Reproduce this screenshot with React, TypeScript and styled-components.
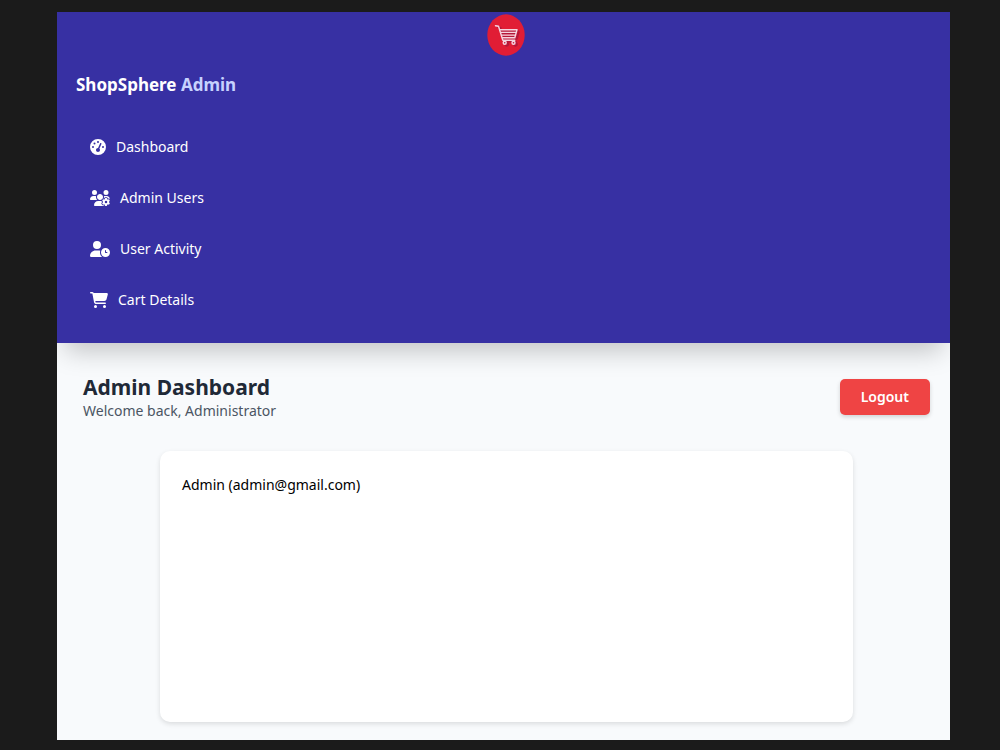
import React from "react";
import styled, { createGlobalStyle } from "styled-components";
import { FaGaugeHigh, FaUsersGear, FaUserClock, FaCartShopping } from "react-icons/fa6";

const GlobalStyle = createGlobalStyle`
  *, *::before, *::after { box-sizing: border-box; }
  body {
    margin: 0;
    background: #1b1b1b;
    font-family: "Segoe UI", "Noto Sans", sans-serif;
    font-size: 14px;
    line-height: 20px;
    color: #000;
  }
  h1, p, ul { margin: 0; padding: 0; }
`;

const Page = styled.div`
  min-height: 100vh;
  padding: 12px 50px 10px 57px;
  display: flex;
  flex-direction: column;
`;

const Shell = styled.div`
  flex: 1;
  display: flex;
  flex-direction: column;
  background: #f8fafc;
  overflow: hidden;
`;

const Sidebar = styled.header`
  background: #3730a3;
  padding: 2px 14px 22px 19px;
  display: flex;
  flex-direction: column;
  box-shadow: 0 16px 24px -8px rgba(0, 0, 0, 0.22);
`;

const Logo = styled.svg`
  align-self: center;
  width: 38px;
  height: 42px;
`;

const Brand = styled.p`
  margin-top: 17px;
  font-size: 17px;
  line-height: 24px;
  font-weight: 700;
  color: #fff;

  span {
    color: #c7d2fe;
  }
`;

const NavList = styled.ul`
  margin-top: 29px;
  list-style: none;
  display: flex;
  flex-direction: column;
  gap: 9px;
`;

const NavLink = styled.a<{ $iconWidth: number }>`
  display: flex;
  align-items: center;
  gap: 10px;
  height: 42px;
  padding: 0 14px;
  border-radius: 8px;
  color: #fff;
  text-decoration: none;

  svg {
    height: 16px;
    width: ${({ $iconWidth }) => $iconWidth}px;
  }
`;

const Main = styled.main`
  flex: 1;
  display: flex;
  flex-direction: column;
  padding: 30px 20px 18px 26px;
`;

const TopBar = styled.div`
  display: flex;
  align-items: center;
  justify-content: space-between;
`;

const Title = styled.h1`
  font-size: 21px;
  line-height: 28px;
  font-weight: 700;
  color: #1f2937;
`;

const Subtitle = styled.p`
  color: #4b5563;
`;

const LogoutButton = styled.button`
  height: 36px;
  padding: 0 21px;
  border: 0;
  border-radius: 5px;
  background: #ef4444;
  color: #fff;
  font: inherit;
  font-weight: 600;
  box-shadow: 0 2px 4px rgba(0, 0, 0, 0.16);
  cursor: pointer;
`;

const Card = styled.section`
  flex: 1;
  width: 100%;
  max-width: 693px;
  margin: 30px auto 0;
  padding: 22px;
  border-radius: 10px;
  background: #fff;
  box-shadow: 0 2px 5px rgba(0, 0, 0, 0.12);
  line-height: 24px;
`;

const links = [
  { label: "Dashboard", href: "#dashboard", Icon: FaGaugeHigh, iconWidth: 16 },
  { label: "Admin Users", href: "#users", Icon: FaUsersGear, iconWidth: 20 },
  { label: "User Activity", href: "#activity", Icon: FaUserClock, iconWidth: 20 },
  { label: "Cart Details", href: "#carts", Icon: FaCartShopping, iconWidth: 18 },
];

function CartShape() {
  return (
    <>
      <path d="M8.500 11.700l3 .6 4.300 13.900h12" />
      <path d="M12.800 15.700H30M13.700 18.400H29.300M14.500 21.100H28.600M15.300 23.700H27.800M30 15.700l-2.200 8" />
      <circle cx="17.700" cy="28.800" r="1.500" />
      <circle cx="26.500" cy="28.800" r="1.500" />
    </>
  );
}

export default function App() {
  return (
    <>
      <GlobalStyle />
      <Page>
        <Shell>
          <Sidebar>
            <Logo viewBox="0 0 38 42" role="img" aria-label="ShopSphere">
              <ellipse cx="19" cy="21" rx="18.700" ry="20.700" fill="#e11d35" />
              <g fill="none" stroke="#96143c" strokeWidth="1.800" opacity="0.6" transform="translate(2 1.500)">
                <CartShape />
              </g>
              <g fill="none" stroke="#f5d5e0" strokeWidth="1.400" strokeLinecap="round" strokeLinejoin="round">
                <CartShape />
              </g>
            </Logo>
            <Brand>
              ShopSphere <span>Admin</span>
            </Brand>
            <nav aria-label="Admin">
              <NavList>
                {links.map(({ label, href, Icon, iconWidth }) => (
                  <li key={label}>
                    <NavLink href={href} $iconWidth={iconWidth}>
                      <Icon aria-hidden="true" />
                      {label}
                    </NavLink>
                  </li>
                ))}
              </NavList>
            </nav>
          </Sidebar>
          <Main>
            <TopBar>
              <div>
                <Title>Admin Dashboard</Title>
                <Subtitle>Welcome back, Administrator</Subtitle>
              </div>
              <LogoutButton type="button">Logout</LogoutButton>
            </TopBar>
            <Card>
              <p>Admin (admin@gmail.com)</p>
            </Card>
          </Main>
        </Shell>
      </Page>
    </>
  );
}
